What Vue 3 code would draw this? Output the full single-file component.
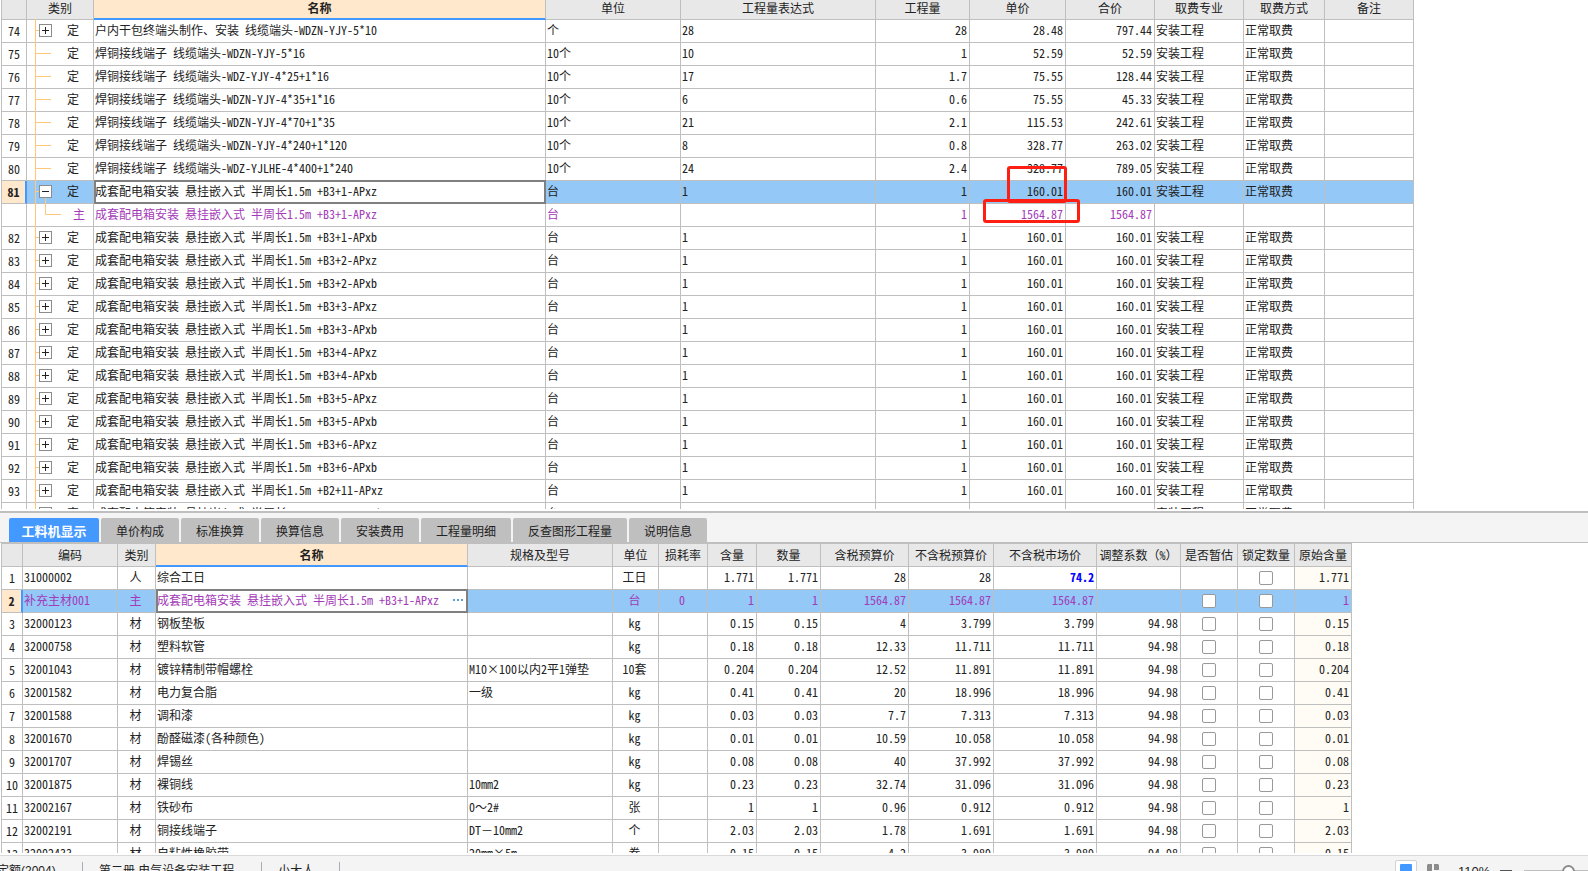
<script setup>
const topCols = [
  { label: '', width: 25 },
  { label: '类别', width: 67 },
  { label: '名称', width: 452, active: true },
  { label: '单位', width: 135 },
  { label: '工程量表达式', width: 195 },
  { label: '工程量', width: 94 },
  { label: '单价', width: 96 },
  { label: '合价', width: 89 },
  { label: '取费专业', width: 89 },
  { label: '取费方式', width: 81 },
  { label: '备注', width: 89 },
]

const wire = (no, name, expr, qty, price, total, unit = '10个', tree = 'leaf') => ({
  no, tree, type: '定', name, unit, expr, qty, price, total, major: '安装工程', mode: '正常取费',
})
const boxName = (code) => `成套配电箱安装 悬挂嵌入式 半周长1.5m +${code}`
const box = (no, code) => wire(no, boxName(code), '1', '1', '160.01', '160.01', '台', 'plus')

const topRows = [
  wire(74, '户内干包终端头制作、安装 线缆端头-WDZN-YJY-5*10', '28', '28', '28.48', '797.44', '个', 'plus'),
  wire(75, '焊铜接线端子 线缆端头-WDZN-YJY-5*16', '10', '1', '52.59', '52.59'),
  wire(76, '焊铜接线端子 线缆端头-WDZ-YJY-4*25+1*16', '17', '1.7', '75.55', '128.44'),
  wire(77, '焊铜接线端子 线缆端头-WDZN-YJY-4*35+1*16', '6', '0.6', '75.55', '45.33'),
  wire(78, '焊铜接线端子 线缆端头-WDZN-YJY-4*70+1*35', '21', '2.1', '115.53', '242.61'),
  wire(79, '焊铜接线端子 线缆端头-WDZN-YJY-4*240+1*120', '8', '0.8', '328.77', '263.02'),
  wire(80, '焊铜接线端子 线缆端头-WDZ-YJLHE-4*400+1*240', '24', '2.4', '328.77', '789.05'),
  { ...box(81, 'B3+1-APxz'), tree: 'minus', selected: true },
  {
    no: '', tree: 'child', type: '主', name: boxName('B3+1-APxz'), unit: '台', expr: '', qty: '1',
    price: '1564.87', total: '1564.87', major: '', mode: '', main: true,
  },
  ...[
    'B3+1-APxb', 'B3+2-APxz', 'B3+2-APxb', 'B3+3-APxz', 'B3+3-APxb', 'B3+4-APxz', 'B3+4-APxb',
    'B3+5-APxz', 'B3+5-APxb', 'B3+6-APxz', 'B3+6-APxb', 'B2+11-APxz', 'B2+11-APxb',
  ].map((code, i) => box(82 + i, code)),
]

const tabs = ['工料机显示', '单价构成', '标准换算', '换算信息', '安装费用', '工程量明细', '反查图形工程量', '说明信息']

const bottomCols = [
  { label: '', width: 21 },
  { label: '编码', width: 95 },
  { label: '类别', width: 38 },
  { label: '名称', width: 312, active: true },
  { label: '规格及型号', width: 145 },
  { label: '单位', width: 46 },
  { label: '损耗率', width: 49 },
  { label: '含量', width: 49 },
  { label: '数量', width: 64 },
  { label: '含税预算价', width: 88 },
  { label: '不含税预算价', width: 85 },
  { label: '不含税市场价', width: 103 },
  { label: '调整系数（%）', width: 84 },
  { label: '是否暂估', width: 57 },
  { label: '锁定数量', width: 57 },
  { label: '原始含量', width: 57 },
]

const mat = (code, name, spec, unit, amount, taxed, net) => ({
  code, type: '材', name, spec, unit, loss: '', amount, taxed, net, market: net, factor: '94.98', estimate: true,
})
const bottomRows = [
  { code: '31000002', type: '人', name: '综合工日', spec: '', unit: '工日', loss: '', amount: '1.771', taxed: '28', net: '28', market: '74.2', factor: '', estimate: false, changed: true },
  { code: '补充主材001', type: '主', name: boxName('B3+1-APxz'), spec: '', unit: '台', loss: '0', amount: '1', taxed: '1564.87', net: '1564.87', market: '1564.87', factor: '', estimate: true, selected: true, main: true },
  mat('32000123', '钢板垫板', '', 'kg', '0.15', '4', '3.799'),
  mat('32000758', '塑料软管', '', 'kg', '0.18', '12.33', '11.711'),
  mat('32001043', '镀锌精制带帽螺栓', 'M10×100以内2平1弹垫', '10套', '0.204', '12.52', '11.891'),
  mat('32001582', '电力复合脂', '一级', 'kg', '0.41', '20', '18.996'),
  mat('32001588', '调和漆', '', 'kg', '0.03', '7.7', '7.313'),
  mat('32001670', '酚醛磁漆(各种颜色)', '', 'kg', '0.01', '10.59', '10.058'),
  mat('32001707', '焊锡丝', '', 'kg', '0.08', '40', '37.992'),
  mat('32001875', '裸铜线', '10mm2', 'kg', '0.23', '32.74', '31.096'),
  mat('32002167', '铁砂布', '0～2#', '张', '1', '0.96', '0.912'),
  mat('32002191', '铜接线端子', 'DT－10mm2', '个', '2.03', '1.78', '1.691'),
  mat('32002433', '自粘性橡胶带', '20mm×5m', '卷', '0.15', '4.2', '3.989'),
]

const sum = (cols) => cols.reduce((total, col) => total + col.width, 1)
</script>

<template>
  <div class="app">
    <section class="upper">
      <table class="grid upper-grid" :style="{ width: sum(topCols) + 'px' }">
        <colgroup>
          <col v-for="(col, i) in topCols" :key="i" :style="{ width: col.width + (i ? 0 : 1) + 'px' }" />
        </colgroup>
        <thead>
          <tr>
            <th v-for="(col, i) in topCols" :key="i" scope="col" :class="{ active: col.active }">{{ col.label }}</th>
          </tr>
        </thead>
        <tbody>
          <tr v-for="(row, i) in topRows" :key="i" :class="{ selected: row.selected, main: row.main }">
            <td class="no">{{ row.no }}</td>
            <td class="tree-cell">
              <div class="tree">
                <svg class="branch" width="36" height="22" viewBox="0 0 36 22">
                  <path class="line" d="M8.500 -1V22" />
                  <path v-if="row.tree === 'leaf'" class="line" d="M9 10.500H24" />
                  <path v-else-if="row.tree === 'child'" class="line" d="M18.500 -6V10.500H34" />
                  <g v-else>
                    <path class="line" d="M9 10.500H12" />
                    <rect x="12.500" y="4.500" width="12" height="12" />
                    <path class="sign" d="M15 10.500H22" />
                    <path v-if="row.tree === 'plus'" class="sign" d="M18.500 7V14" />
                  </g>
                </svg>
                <span class="type" :class="{ deep: row.tree === 'child' }">{{ row.type }}</span>
              </div>
            </td>
            <td :class="{ focus: row.selected }">{{ row.name }}</td>
            <td>{{ row.unit }}</td>
            <td>{{ row.expr }}</td>
            <td class="num">{{ row.qty }}</td>
            <td class="num">{{ row.price }}</td>
            <td class="num">{{ row.total }}</td>
            <td>{{ row.major }}</td>
            <td>{{ row.mode }}</td>
            <td></td>
          </tr>
        </tbody>
      </table>
      <div class="mark mark-price"></div>
      <div class="mark mark-main"></div>
    </section>

    <nav class="tabs">
      <button v-for="(tab, i) in tabs" :key="tab" type="button" class="tab" :class="{ current: i === 0 }">{{ tab }}</button>
    </nav>

    <section class="lower">
      <table class="grid lower-grid" :style="{ width: sum(bottomCols) + 'px' }">
        <colgroup>
          <col v-for="(col, i) in bottomCols" :key="i" :style="{ width: col.width + (i ? 0 : 1) + 'px' }" />
        </colgroup>
        <thead>
          <tr>
            <th v-for="(col, i) in bottomCols" :key="i" scope="col" :class="{ active: col.active }">{{ col.label }}</th>
          </tr>
        </thead>
        <tbody>
          <tr v-for="(row, i) in bottomRows" :key="row.code" :class="{ selected: row.selected, main: row.main }">
            <td class="no">{{ i + 1 }}</td>
            <td>{{ row.code }}</td>
            <td class="mid">{{ row.type }}</td>
            <td :class="{ focus: row.selected }">
              <div v-if="row.selected" class="editor">
                <span>{{ row.name }}</span>
                <button type="button" class="more" aria-label="选择"><i></i><i></i><i></i></button>
              </div>
              <template v-else>{{ row.name }}</template>
            </td>
            <td>{{ row.spec }}</td>
            <td class="mid">{{ row.unit }}</td>
            <td class="mid">{{ row.loss }}</td>
            <td class="num">{{ row.amount }}</td>
            <td class="num">{{ row.amount }}</td>
            <td class="num">{{ row.taxed }}</td>
            <td class="num">{{ row.net }}</td>
            <td class="num" :class="{ changed: row.changed }">{{ row.market }}</td>
            <td class="num">{{ row.factor }}</td>
            <td class="tick"><input v-if="row.estimate" type="checkbox" aria-label="是否暂估" /></td>
            <td class="tick"><input type="checkbox" aria-label="锁定数量" /></td>
            <td class="num origin">{{ row.amount }}</td>
          </tr>
        </tbody>
      </table>
    </section>

    <footer class="status">
      <div class="status-row">
        <span class="item item-quota">定额(2004)</span>
        <span class="item item-book">第二册 电气设备安装工程</span>
        <span class="item item-user">小大人</span>
        <div class="tools">
          <button type="button" class="view on" aria-label="单栏">
            <svg width="12" height="14" viewBox="0 0 12 14"><rect width="12" height="14" rx="1" fill="#4399ff" /></svg>
          </button>
          <button type="button" class="view" aria-label="双栏">
            <svg width="12" height="14" viewBox="0 0 12 14" fill="#8c8c8c">
              <path d="M1 0H5V14H0V1ZM7 0H11L12 1V6H7ZM7 8H12V14H7Z" />
            </svg>
          </button>
          <span class="zoom">110%</span>
          <button type="button" class="minus" aria-label="缩小"></button>
          <input class="slider" type="range" min="0" max="100" value="50" aria-label="缩放" />
        </div>
      </div>
    </footer>
  </div>
</template>

<style>
html,
body {
  margin: 0;
  overflow: hidden;
  background: #fff;
}
</style>

<style scoped>
.app {
  display: flex;
  flex-direction: column;
  height: 100vh;
  overflow: hidden;
  background: #fff;
  color: #222;
  font-family: "Noto Sans Mono CJK SC", "Liberation Serif", "Noto Sans CJK SC", monospace;
  font-size: 12px;
}
button {
  font: inherit;
  color: inherit;
  border: 0;
  padding: 0;
}
.upper {
  position: relative;
  flex: none;
  height: 509px;
  overflow: hidden;
}
.grid {
  table-layout: fixed;
  border-collapse: separate;
  border-spacing: 0;
  margin-left: 1px;
}
.grid th,
.grid td {
  box-sizing: border-box;
  padding: 0 2px 0 1px;
  border: solid #bfbfbf;
  border-width: 0 1px 1px 0;
  overflow: hidden;
  white-space: nowrap;
  line-height: 20px;
}
.grid th:first-child,
.grid td:first-child {
  border-left-width: 1px;
}
.grid th {
  background: #e8e8e8;
  font-weight: 400;
  text-align: center;
  padding: 0;
}
.grid td {
  height: 23px;
  vertical-align: top;
}
.grid th.active {
  background: #ffe8cb;
  border-bottom: 2px solid #4399ff;
  font-weight: 700;
}
.upper-grid th {
  height: 20px;
  padding-bottom: 3px;
  line-height: 16px;
}
.upper-grid th.active {
  line-height: 15px;
}
.lower-grid th {
  height: 24px;
  border-top-width: 1px;
  line-height: 22px;
}
.lower-grid th.active {
  border-top: 1px solid #bfbfbf;
  line-height: 20px;
}
.grid td.no {
  padding: 0;
  text-align: center;
  line-height: 22px;
}
.grid td.num {
  text-align: right;
}
.grid td.mid {
  padding: 0 2px 0 0;
  text-align: center;
}
.grid td.origin {
  background: #fffbf5;
}
.grid td.changed {
  color: #00f;
  font-weight: 700;
}
.main td {
  color: #a33ab8;
}
.grid .selected td {
  background: #93c8f7;
}
.grid .selected td.no {
  background: #ffe8cb;
  border-right: 2px solid #4399ff;
  color: #222;
  font-weight: 700;
}
.grid .selected td.focus {
  position: relative;
  overflow: visible;
  background: #fff;
}
.focus::after {
  content: "";
  position: absolute;
  inset: -1px -1px -1px 0;
  border: 2px solid #808080;
  pointer-events: none;
}
.grid td.tree-cell {
  padding: 0;
  overflow: visible;
}
.tree {
  display: flex;
}
.branch {
  flex: none;
  overflow: visible;
  fill: none;
}
.line {
  stroke: #ffc777;
}
.branch rect {
  fill: #fff;
  stroke: #8c8c8c;
}
.sign {
  stroke: #222;
}
.type {
  padding-left: 4px;
}
.type.deep {
  padding-left: 10px;
}
.mark {
  position: absolute;
  box-sizing: border-box;
  border: 3px solid #fe1f12;
  border-radius: 3px;
}
.mark-price {
  left: 1007px;
  top: 166px;
  width: 60px;
  height: 37px;
}
.mark-main {
  left: 983px;
  top: 199px;
  width: 97px;
  height: 24px;
}
.tabs {
  display: flex;
  flex: none;
  gap: 2px;
  margin-top: 2px;
  padding: 5px 9px 0;
  border: solid #bfbfbf;
  border-width: 2px 0 1px;
  background: #f4f4f4;
}
.tab {
  height: 24px;
  padding: 0 15px;
  border-radius: 2px 2px 0 0;
  background: #bfbfbf;
}
.tab.current {
  width: 90px;
  padding: 0;
  background: #4399ff;
  color: #fff;
  font-size: 13px;
  font-weight: 700;
}
.lower {
  flex: 1;
  min-height: 0;
  margin-bottom: 2px;
  overflow: hidden;
}
.editor {
  display: flex;
  align-items: center;
  justify-content: space-between;
  padding-right: 2px;
}
.more {
  display: flex;
  gap: 2px;
  background: none;
}
.more i {
  width: 2px;
  height: 2px;
  background: #5a9fd6;
}
.grid td.tick {
  padding: 4px 0 0;
  line-height: 0;
  text-align: center;
}
.tick input {
  appearance: none;
  box-sizing: border-box;
  width: 14px;
  height: 14px;
  margin: 0;
  border: 1px solid #999;
  border-radius: 2px;
  background: #fff;
}
.status {
  flex: none;
  height: 15px;
  overflow: hidden;
  border-top: 1px solid #d9d9d9;
  background: #f4f4f4;
  font-family: "Liberation Sans", "Noto Sans CJK SC", sans-serif;
}
.status-row {
  display: flex;
  height: 31px;
  line-height: 31px;
}
.item {
  box-sizing: border-box;
  height: 19px;
  margin-top: 6px;
  line-height: 19px;
  border-right: 1px solid #a9adb5;
}
.item-quota {
  width: 83px;
  text-indent: -3px;
}
.item-book {
  padding: 0 27px 0 16px;
}
.item-user {
  padding: 0 25px 0 16px;
}
.tools {
  display: flex;
  align-items: center;
  height: 30px;
  margin-left: auto;
}
.view {
  display: flex;
  align-items: center;
  justify-content: center;
  box-sizing: border-box;
  width: 22px;
  height: 22px;
  margin-right: 5px;
  border: 1px solid transparent;
  border-radius: 2px;
  background: none;
}
.view.on {
  border-color: #d2d2d2;
  background: #fff;
}
.zoom {
  box-sizing: border-box;
  width: 51px;
  padding-left: 9px;
  font-size: 13px;
}
.minus {
  width: 12px;
  height: 2px;
  background: #555;
}
.slider {
  appearance: none;
  width: 88px;
  height: 2px;
  margin: 0 -24px 0 12px;
  background: #bfbfbf;
}
.slider::-webkit-slider-thumb {
  appearance: none;
  box-sizing: border-box;
  width: 13px;
  height: 13px;
  border: 2px solid #8c8c8c;
  border-radius: 50%;
  background: #fff;
}
</style>
